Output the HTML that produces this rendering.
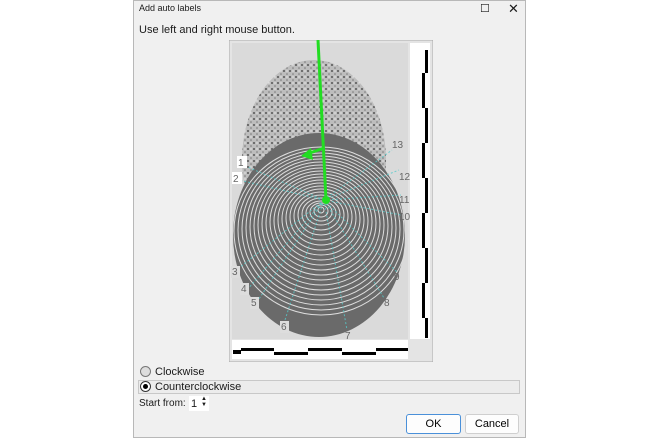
<!DOCTYPE html>
<html><head><style>
body{margin:0;width:660px;height:440px;background:#fff;position:relative;font-family:"Liberation Sans",sans-serif;overflow:hidden}
.dlg{position:absolute;left:133px;top:0;width:393px;height:438px;background:#f0f0f0;border:1px solid #b8b8b8;box-sizing:border-box}
.t{position:absolute;font-size:11px;color:#1a1a1a;white-space:nowrap}
.btn{position:absolute;height:20px;background:#fdfdfd;border:1px solid #cfcfcf;border-radius:3px;box-sizing:border-box;font-size:11px;text-align:center;line-height:18px}
.rad{position:absolute;width:11px;height:11px;border:1px solid #333;border-radius:50%;box-sizing:border-box;background:#fff}
</style></head><body>
<div class="dlg"></div>
<div class="t" style="left:139px;top:3px;font-size:9px">Add auto labels</div>
<div class="t" style="left:480px;top:2px;font-size:11px">☐</div>
<div class="t" style="left:508px;top:1px;font-size:13px">✕</div>
<div class="t" style="left:139px;top:24px">Use left and right mouse button.</div>
<svg style="position:absolute;left:229px;top:40px" width="204" height="322" viewBox="0 0 204 322">
<defs><pattern id="sp" width="6" height="6" patternUnits="userSpaceOnUse"><rect width="6" height="6" fill="#bdbdbd"/><circle cx="1" cy="1" r="1" fill="#555"/><circle cx="4" cy="4" r="0.8" fill="#777"/><circle cx="4" cy="1" r=".6" fill="#fff"/></pattern></defs>
<rect x="0" y="0" width="204" height="322" fill="#e4e4e4" stroke="#aaa"/>
<rect x="3" y="3" width="176" height="296" fill="#dadada"/>
<ellipse cx="85" cy="120" rx="72" ry="100" fill="url(#sp)"/>
<ellipse cx="90" cy="195" rx="86" ry="102" fill="#6a6a6a"/>
<g fill="none" stroke="#ddd" stroke-width="1">
<ellipse cx="92" cy="170" rx="3" ry="3"/><ellipse cx="92" cy="171" rx="7" ry="6"/><ellipse cx="92" cy="172" rx="11" ry="9"/><ellipse cx="92" cy="173" rx="15" ry="12"/><ellipse cx="92" cy="174" rx="19" ry="16"/><ellipse cx="92" cy="175" rx="23" ry="20"/><ellipse cx="92" cy="176" rx="27" ry="24"/><ellipse cx="92" cy="177" rx="31" ry="28"/><ellipse cx="92" cy="178" rx="35" ry="32"/><ellipse cx="92" cy="179" rx="39" ry="36"/><ellipse cx="92" cy="180" rx="43" ry="40"/><ellipse cx="92" cy="181" rx="47" ry="44"/><ellipse cx="92" cy="182" rx="51" ry="48"/><ellipse cx="92" cy="183" rx="55" ry="52"/><ellipse cx="92" cy="184" rx="59" ry="56"/><ellipse cx="92" cy="185" rx="63" ry="60"/><ellipse cx="92" cy="186" rx="67" ry="64"/><ellipse cx="92" cy="187" rx="71" ry="68"/><ellipse cx="92" cy="188" rx="75" ry="72"/><ellipse cx="92" cy="189" rx="79" ry="76"/><ellipse cx="92" cy="190" rx="83" ry="80"/><ellipse cx="92" cy="191" rx="87" ry="84"/>
</g>
<g stroke="#5cc" stroke-width="1" stroke-dasharray="2 2" opacity=".8">
<line x1="95" y1="160" x2="14" y2="125"/><line x1="95" y1="160" x2="10" y2="140"/><line x1="95" y1="160" x2="10" y2="228"/><line x1="95" y1="160" x2="18" y2="250"/><line x1="95" y1="160" x2="26" y2="265"/><line x1="95" y1="160" x2="55" y2="283"/><line x1="95" y1="160" x2="118" y2="290"/><line x1="95" y1="160" x2="155" y2="258"/><line x1="95" y1="160" x2="168" y2="232"/><line x1="95" y1="160" x2="172" y2="175"/><line x1="95" y1="160" x2="172" y2="155"/><line x1="95" y1="160" x2="170" y2="130"/><line x1="95" y1="160" x2="163" y2="110"/>
</g>
<g font-size="10" fill="#666" font-family="Liberation Sans">
<rect x="8" y="116" width="10" height="12" fill="#fff"/><text x="9" y="126">1</text>
<rect x="3" y="132" width="10" height="12" fill="#fff"/><text x="4" y="142">2</text>
<rect x="2" y="226" width="9" height="12" fill="#ddd"/><text x="3" y="235">3</text>
<rect x="11" y="243" width="9" height="12" fill="#ddd"/><text x="12" y="252">4</text>
<rect x="21" y="257" width="9" height="12" fill="#ddd"/><text x="22" y="266">5</text>
<rect x="51" y="281" width="9" height="12" fill="#ddd"/><text x="52" y="290">6</text>
<text x="116" y="299">7</text><text x="155" y="266">8</text><text x="165" y="240">9</text>
<text x="170" y="180">10</text><text x="170" y="163">11</text><text x="170" y="140">12</text><text x="163" y="108">13</text>
</g>
<line x1="89" y1="0" x2="97" y2="160" stroke="#2d2" stroke-width="3"/>
<line x1="95" y1="108" x2="78" y2="114" stroke="#2d2" stroke-width="3"/>
<polygon points="72,116 82,108 84,120" fill="#2d2"/>
<circle cx="97" cy="160" r="4" fill="#2d2"/>
<rect x="181" y="3" width="20" height="296" fill="#fff"/>
<g fill="#000"><rect x="196" y="10" width="3" height="23"/><rect x="193" y="33" width="3" height="35"/><rect x="196" y="68" width="3" height="35"/><rect x="193" y="103" width="3" height="35"/><rect x="196" y="138" width="3" height="35"/><rect x="193" y="173" width="3" height="35"/><rect x="196" y="208" width="3" height="35"/><rect x="193" y="243" width="3" height="35"/><rect x="196" y="278" width="3" height="20"/></g>
<rect x="3" y="300" width="176" height="19" fill="#fff"/>
<g fill="#000"><rect x="4" y="310" width="8" height="4"/><rect x="12" y="308" width="33" height="3"/><rect x="45" y="312" width="34" height="3"/><rect x="79" y="308" width="34" height="3"/><rect x="113" y="312" width="34" height="3"/><rect x="147" y="308" width="32" height="3"/></g>
</svg>
<div class="rad" style="left:140px;top:366px;background:#ddd;border-color:#777"></div>
<div class="t" style="left:155px;top:366px">Clockwise</div>
<div style="position:absolute;left:138px;top:380px;width:382px;height:14px;border:1px solid #c8c8c8;background:#ececec;box-sizing:border-box"></div>
<div class="rad" style="left:140px;top:381px"><div style="position:absolute;left:2px;top:2px;width:5px;height:5px;border-radius:50%;background:#000"></div></div>
<div class="t" style="left:155px;top:381px">Counterclockwise</div>
<div class="t" style="left:139px;top:398px;font-size:10px">Start from:</div>
<div style="position:absolute;left:189px;top:396px;width:20px;height:15px;background:#fff"></div>
<div class="t" style="left:191px;top:398px">1</div>
<div class="t" style="left:201px;top:396px;font-size:6px;line-height:6px">▲<br>▼</div>
<div class="btn" style="left:406px;top:414px;width:55px;border-color:#4a90d9">OK</div>
<div class="btn" style="left:465px;top:414px;width:54px">Cancel</div>
</body></html>
